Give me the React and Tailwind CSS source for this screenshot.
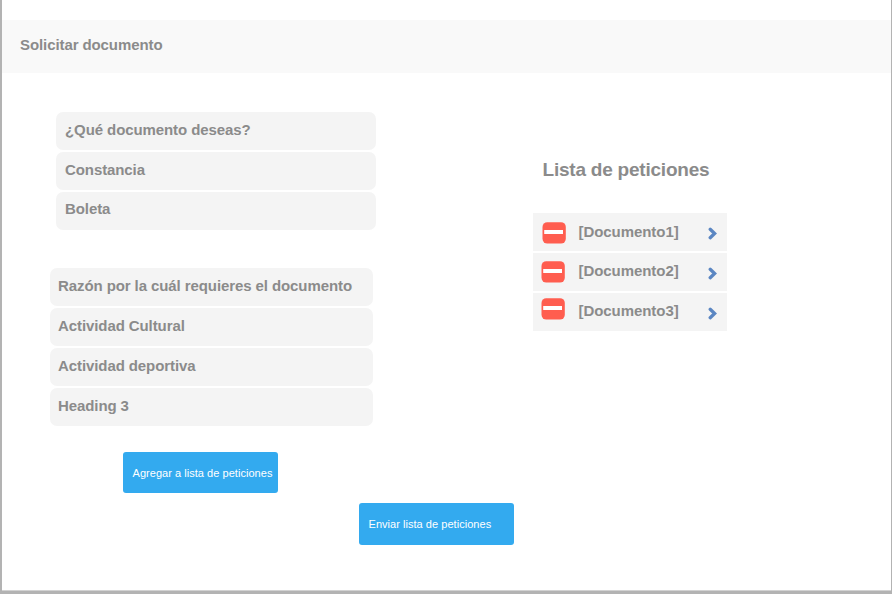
function Row({ label, className = "" }) {
  return (
    <li className={"flex h-[38px] items-center rounded-[7px] bg-[#f4f4f4] leading-5 tracking-[-0.09px] " + className}>
      {label}
    </li>
  );
}

function RemoveIcon() {
  return (
    <svg width="24" height="22" viewBox="0 0 24 22" className="shrink-0">
      <rect x="0.5" y="0.2" width="23.3" height="21.4" rx="4.8" fill="#ff5d4f" />
      <rect x="2.2" y="8" width="18.8" height="4" fill="#fff" />
    </svg>
  );
}

function ChevronIcon() {
  return (
    <svg width="10" height="13" viewBox="0 0 10 13" className="shrink-0">
      <path d="M2.2 2.3 L6.6 6.5 L2.2 10.7" fill="none" stroke="#5b86c2" strokeWidth="3.3" strokeLinecap="round" strokeLinejoin="miter" />
    </svg>
  );
}

const requests = [
  { label: "[Documento1]", icon: "ml-[9px] mt-[9px]", text: "ml-[12.5px] mt-[9px]" },
  { label: "[Documento2]", icon: "ml-2 mt-[8px]", text: "ml-[13.5px] mt-[8px]" },
  { label: "[Documento3]", icon: "ml-2 mt-[5px]", text: "ml-[13.5px] mt-[8px]" },
];

export default function App() {
  return (
    <div className="h-[594px] w-[892px] overflow-hidden bg-[#b3b3b3] pl-[2px] font-['Liberation_Sans',Arial,sans-serif] text-[#8b8b8b]">
      <div className="h-[591px] w-[889px] border-b border-[#d2d2d2] bg-white pt-5">
        <header className="flex h-[53px] items-center bg-[#f9f9f9] pb-[3px] pl-[18px]">
          <h1 className="text-[15px] font-bold leading-5 tracking-[-0.09px]">Solicitar documento</h1>
        </header>
        <main className="flex h-[379px]">
          <section className="w-[531px] shrink-0 pt-[39px] text-[15px] font-bold">
            <ul className="ml-[54px] flex w-[320px] flex-col gap-[2px]">
              <Row label="¿Qué documento deseas?" className="pb-[2px] pl-[9px]" />
              <Row label="Constancia" className="pb-[2px] pl-[9px]" />
              <Row label="Boleta" className="pb-[4px] pl-[9px]" />
            </ul>
            <ul className="ml-12 mt-[38px] flex w-[323px] flex-col gap-[2px]">
              <Row label="Razón por la cuál requieres el documento" className="pb-[2px] pl-[8px]" />
              <Row label="Actividad Cultural" className="pb-[2px] pl-[8px]" />
              <Row label="Actividad deportiva" className="pb-[2px] pl-[8px]" />
              <Row label="Heading 3" className="pb-[2px] pl-[8px]" />
            </ul>
          </section>
          <section className="pt-[85px]">
            <h2 className="ml-[9.5px] text-[19px] font-bold leading-6 tracking-[-0.22px]">Lista de peticiones</h2>
            <ul className="mt-[31px] flex w-[194px] flex-col gap-[2px] text-[15px] font-bold">
              {requests.map((r) => (
                <li key={r.label} className="flex h-[38px] items-start bg-[#f4f4f4]">
                  <span className={r.icon}><RemoveIcon /></span>
                  <span className={"leading-5 tracking-[-0.06px] " + r.text}>{r.label}</span>
                  <span className="ml-auto mr-[9px] mt-[14px]"><ChevronIcon /></span>
                </li>
              ))}
            </ul>
          </section>
        </main>
        <button className="ml-[121px] flex h-[41px] w-[155px] items-center whitespace-nowrap rounded-[3px] bg-[#33aaef] pl-[9.5px] pt-[2px] text-[11px] tracking-[0.04px] text-white">
          Agregar a lista de peticiones
        </button>
        <button className="ml-[357px] mt-[10px] flex h-[42px] w-[155px] items-center whitespace-nowrap rounded-[3px] bg-[#33aaef] pl-[9.5px] text-[11px] tracking-[0.04px] text-white">
          Enviar lista de peticiones
        </button>
      </div>
    </div>
  );
}
